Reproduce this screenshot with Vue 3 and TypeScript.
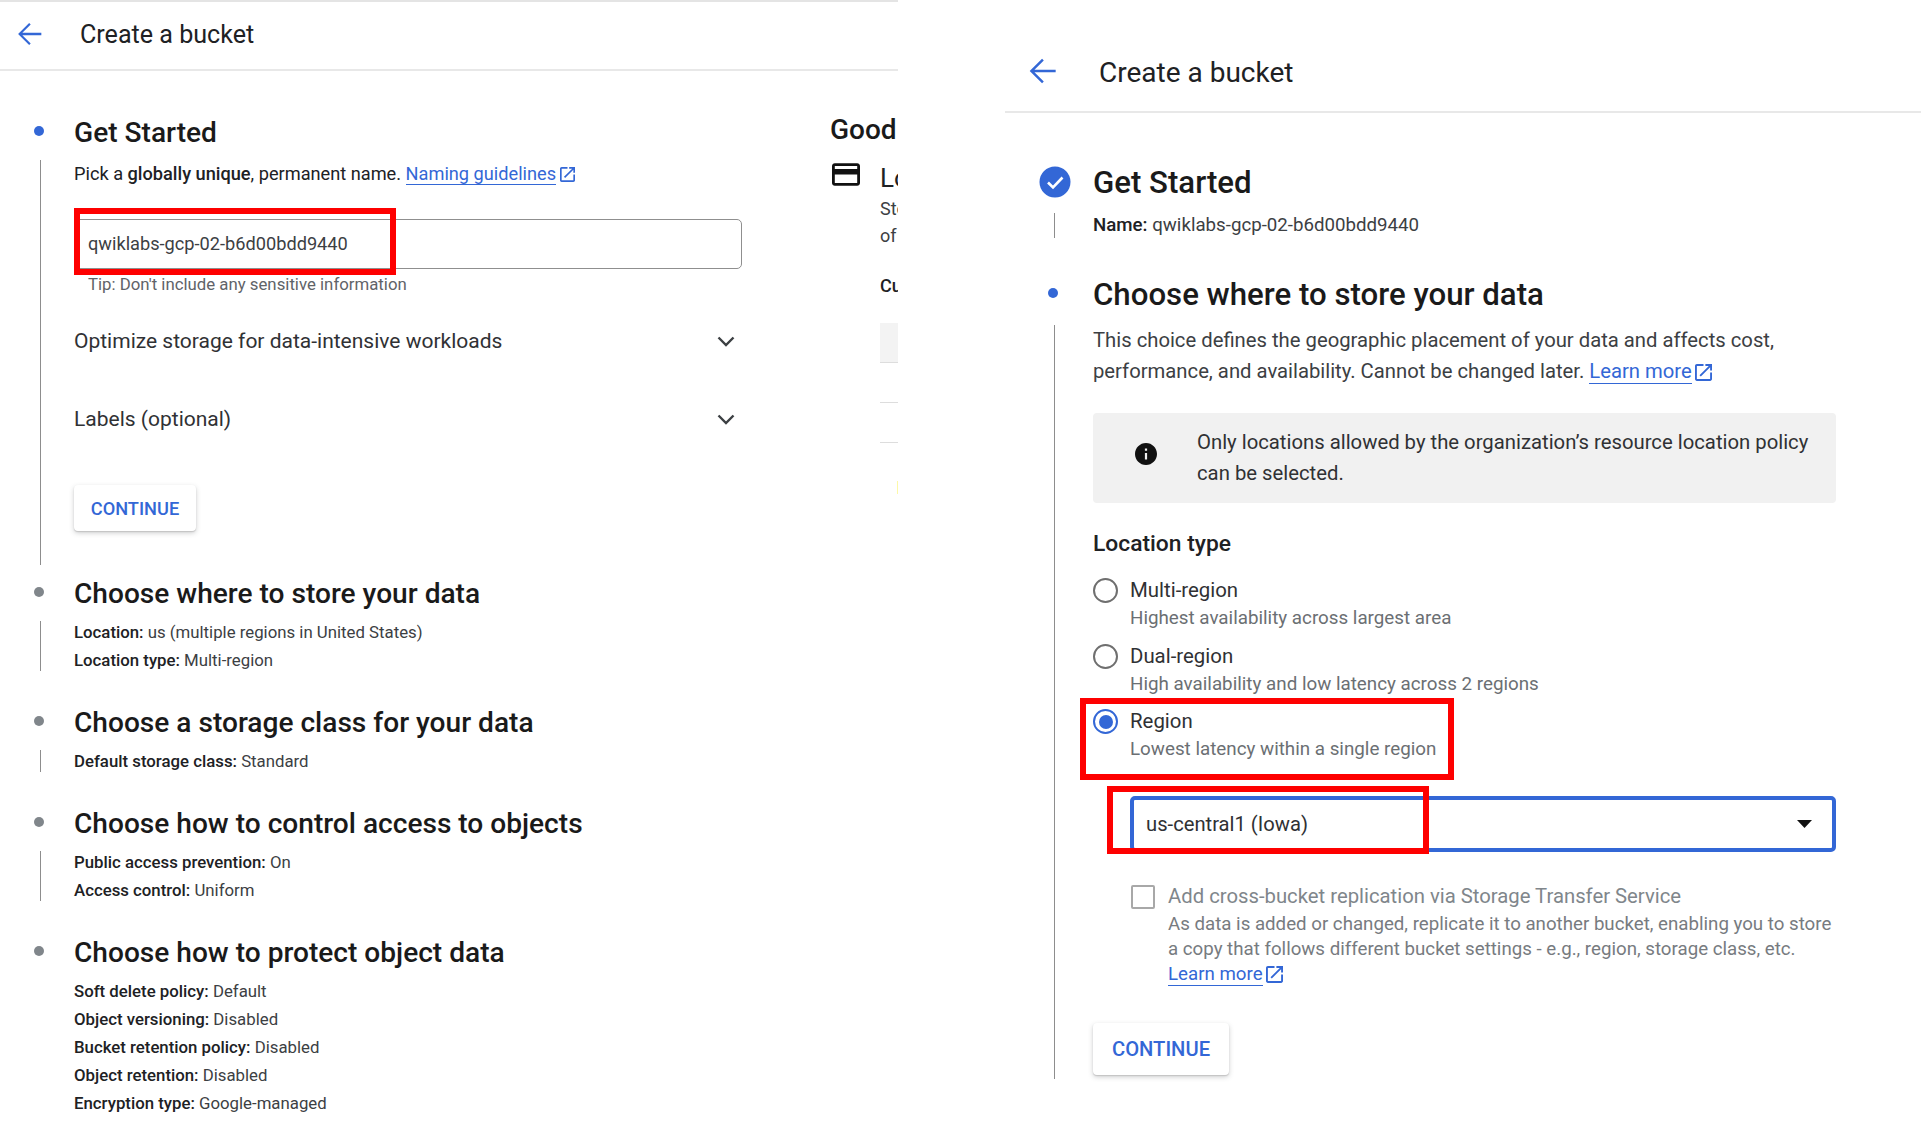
<script setup lang="ts">
interface Fact { label: string; value: string }
interface Summary { title: string; facts: Fact[] }

const summaries: Summary[] = [
  { title: 'Choose where to store your data', facts: [
    { label: 'Location', value: 'us (multiple regions in United States)' },
    { label: 'Location type', value: 'Multi-region' } ] },
  { title: 'Choose a storage class for your data', facts: [
    { label: 'Default storage class', value: 'Standard' } ] },
  { title: 'Choose how to control access to objects', facts: [
    { label: 'Public access prevention', value: 'On' },
    { label: 'Access control', value: 'Uniform' } ] },
  { title: 'Choose how to protect object data', facts: [
    { label: 'Soft delete policy', value: 'Default' },
    { label: 'Object versioning', value: 'Disabled' },
    { label: 'Bucket retention policy', value: 'Disabled' },
    { label: 'Object retention', value: 'Disabled' },
    { label: 'Encryption type', value: 'Google-managed' } ] },
]

const regions = [
  { name: 'Multi-region', hint: 'Highest availability across largest area', on: false },
  { name: 'Dual-region', hint: 'High availability and low latency across 2 regions', on: false },
  { name: 'Region', hint: 'Lowest latency within a single region', on: true },
]

const openNew = 'M19 19H5V5h7V3H5c-1.11 0-2 .9-2 2v14c0 1.1.89 2 2 2h14c1.1 0 2-.89 2-2v-7h-2v7zM14 3v2h3.59l-9.83 9.83 1.41 1.41L19 6.41V10h2V3h-7z'
const back = 'M20 11.2H6.6l5.9-5.9L11.4 4.2 3.6 12l7.8 7.8 1.1-1.1-5.9-5.9H20z'
</script>

<template>
  <div class="page">
    <section class="panel left">
      <header class="bar bar-left">
        <svg class="back" viewBox="0 0 24 24"><path :d="back" /></svg>
        <h1>Create a bucket</h1>
      </header>
      <div class="columns">
        <div class="steps">
          <div class="head first">
            <span class="dot blue"></span>
            <h2>Get Started</h2>
          </div>
          <div class="body form">
            <p class="lead">Pick a <b>globally unique</b>, permanent name. <a>Naming guidelines</a><svg class="ext" viewBox="3 3 18 18"><path :d="openNew" /></svg></p>
            <div class="name-input">
              <span>qwiklabs-gcp-02-b6d00bdd9440</span>
              <i class="mark mark-name"></i>
            </div>
            <p class="tip">Tip: Don't include any sensitive information</p>
            <div class="expanders">
              <div class="expander">
                <span>Optimize storage for data-intensive workloads</span>
                <svg class="chev" viewBox="0 0 18 11"><path d="M1.5 1.5 9 9l7.5-7.5" /></svg>
              </div>
              <div class="expander">
                <span>Labels (optional)</span>
                <svg class="chev" viewBox="0 0 18 11"><path d="M1.5 1.5 9 9l7.5-7.5" /></svg>
              </div>
            </div>
            <button class="cta small">CONTINUE</button>
          </div>
          <template v-for="(s, i) in summaries" :key="s.title">
            <div class="head" :class="{ spaced: i > 0 }">
              <span class="dot grey"></span>
              <h2>{{ s.title }}</h2>
            </div>
            <div class="body facts" :class="{ bare: i === summaries.length - 1 }">
              <p v-for="f in s.facts" :key="f.label"><b>{{ f.label }}:</b> {{ f.value }}</p>
            </div>
          </template>
        </div>
        <aside class="side">
          <h3>Good to know</h3>
          <div class="side-row">
            <svg class="card" viewBox="2 4 20 16"><path d="M20 4H4c-1.11 0-1.99.89-1.99 2L2 18c0 1.11.89 2 2 2h16c1.11 0 2-.89 2-2V6c0-1.11-.89-2-2-2zm0 14H4v-6h16v6zm0-10H4V6h16v2z" /></svg>
            <div class="side-text">
              <div class="side-title">Location pricing</div>
              <div class="side-line l1">Storage rates</div>
              <div class="side-line l2">of your data</div>
              <div class="side-line cu">Current</div>
              <div class="side-cell"></div>
              <div class="side-cell plain"></div>
              <div class="side-cell plain"></div>
              <div class="side-tick"></div>
            </div>
          </div>
        </aside>
      </div>
    </section>

    <section class="panel right">
      <header class="bar bar-right">
        <svg class="back big" viewBox="0 0 24 24"><path :d="back" /></svg>
        <h1>Create a bucket</h1>
      </header>
      <div class="steps r">
        <div class="head first">
          <svg class="done" viewBox="0 0 32 32"><circle cx="16" cy="16" r="15.5" /><path d="M9 16.5l5 5 9.5-10" /></svg>
          <h2>Get Started</h2>
        </div>
        <div class="body name-line"><p><b>Name:</b> qwiklabs-gcp-02-b6d00bdd9440</p></div>
        <div class="head second">
          <span class="dot blue"></span>
          <h2>Choose where to store your data</h2>
        </div>
        <div class="body where">
          <p class="para">This choice defines the geographic placement of your data and affects cost, performance, and availability. Cannot be changed later. <a>Learn more</a><svg class="ext" viewBox="3 3 18 18"><path :d="openNew" /></svg></p>
          <div class="notice">
            <svg class="info" viewBox="2 2 20 20"><path d="M12 2C6.48 2 2 6.48 2 12s4.48 10 10 10 10-4.48 10-10S17.52 2 12 2zm1 15h-2v-6h2v6zm0-8h-2V7h2v2z" /></svg>
            <p>Only locations allowed by the organization’s resource location policy can be selected.</p>
          </div>
          <h4>Location type</h4>
          <div class="radios">
            <div v-for="r in regions" :key="r.name" class="radio">
              <span class="knob" :class="{ on: r.on }"></span>
              <div>
                <div class="radio-name">{{ r.name }}</div>
                <div class="radio-hint">{{ r.hint }}</div>
              </div>
              <i v-if="r.on" class="mark mark-region"></i>
            </div>
          </div>
          <div class="select">
            <span>us-central1 (Iowa)</span>
            <svg class="caret" viewBox="0 0 15 8"><path d="M0 0h15L7.5 8z" /></svg>
            <i class="mark mark-select"></i>
          </div>
          <div class="replicate">
            <span class="box"></span>
            <div>
              <div class="rep-title">Add cross-bucket replication via Storage Transfer Service</div>
              <p class="rep-text">As data is added or changed, replicate it to another bucket, enabling you to store a copy that follows different bucket settings - e.g., region, storage class, etc.</p>
              <p class="rep-link"><a>Learn more</a><svg class="ext" viewBox="3 3 18 18"><path :d="openNew" /></svg></p>
            </div>
          </div>
          <button class="cta large">CONTINUE</button>
        </div>
      </div>
    </section>
  </div>
</template>

<style scoped>
.page {
  display: flex;
  width: 1921px;
  height: 1125px;
  overflow: hidden;
  background: #fff;
  color: #202124;
  font-family: Roboto, "Liberation Sans", sans-serif;
}
p, h1, h2, h3, h4 { margin: 0; }
b { font-weight: 500; color: #202124; }
a { color: #3367d6; border-bottom: 1.5px solid #3367d6; }
.panel { flex: none; }
.left { width: 898px; overflow: hidden; border-top: 2px solid #e4e4e4; height: 1123px; }
.right { width: 916px; margin-left: 107px; padding-top: 33px; }

.bar { display: flex; align-items: center; border-bottom: 2px solid #e8e8e8; }
.bar h1 { font-weight: 400; }
.bar-left { height: 67px; padding-left: 13px; }
.bar-left h1 { font-size: 25.1px; margin-left: 33px; margin-top: -2px; }
.bar-right { height: 78px; padding-left: 19px; }
.bar-right h1 { font-size: 28px; margin-left: 37px; }
.back { width: 34px; height: 34px; fill: #3367d6; flex: none; margin-top: -3px; }
.back.big { width: 38px; height: 38px; margin-top: -2px; }

.columns { display: flex; }
.steps { width: 830px; flex: none; padding-top: 33px; }
.steps.r { width: auto; padding-top: 38px; }

.head { display: flex; align-items: center; height: 56px; position: relative; padding-left: 74px; }
.head.spaced { margin-top: 23px; }
.head h2 { font-size: 28.1px; font-weight: 500; color: #1a1a1a; white-space: nowrap; }
.dot { position: absolute; left: 34px; width: 10px; height: 10px; border-radius: 50%; top: 22px; }
.dot.blue { background: #3367d6; }
.dot.grey { background: #80868b; }

.body { margin-left: 40px; padding-left: 33px; border-left: 1.5px solid #8d8d8d; }
.body.bare { border-left-color: transparent; }
.form { height: 405px; width: 668px; box-sizing: content-box; }
.lead { font-size: 18.2px; line-height: 22px; padding-top: 3px; }
.ext { width: 15px; height: 15px; fill: #3367d6; vertical-align: -2px; margin-left: 4px; }
.name-input {
  position: relative;
  display: flex;
  align-items: center;
  box-sizing: border-box;
  height: 50px;
  margin-top: 34px;
  padding: 0 0 2px 13px;
  border: 1.5px solid #8f8f8f;
  border-radius: 5px;
  font-size: 18.2px;
  color: #3c4043;
}
.mark { position: absolute; box-sizing: border-box; border: 6px solid #fe0000; display: block; }
.mark-name { left: -1px; top: -12px; width: 322px; height: 67px; }
.tip { margin-top: 5px; padding-left: 14px; font-size: 16.8px; line-height: 20px; color: #5f6368; }
.expanders { margin-top: 8px; }
.expander { display: flex; align-items: center; justify-content: space-between; height: 78px; font-size: 21px; color: #303134; padding-right: 7px; }
.chev { width: 18px; height: 11px; fill: none; stroke: #3c4043; stroke-width: 2.4; }
.cta {
  display: block;
  border: 0;
  border-radius: 4px;
  background: #fff;
  color: #3367d6;
  font-family: inherit;
  font-weight: 500;
  box-shadow: 0 1px 1px #c4c4c4, 0 2px 5px rgba(60, 64, 67, .25);
}
.cta.small { width: 122px; height: 46px; margin-top: 27px; font-size: 18.2px; }
.cta.large { width: 136px; height: 52px; margin-top: 36px; font-size: 20.2px; }

.facts p { font-size: 16.8px; line-height: 22px; color: #3c4043; }
.facts p + p { margin-top: 6px; }

.side { width: 68px; flex: none; overflow: hidden; white-space: nowrap; padding-top: 39px; }
.side h3 { font-size: 28px; font-weight: 500; line-height: 40px; color: #1a1a1a; }
.side-row { display: flex; margin-top: 13px; }
.card { width: 28px; height: 23px; fill: #111; flex: none; margin: 0 0 0 2px; }
.side-text { margin-left: 20px; }
.side-title { font-size: 26px; line-height: 30px; color: #202124; }
.side-line { font-size: 18px; line-height: 27px; color: #3c4043; }
.side-line.l1 { margin-top: 2px; }
.side-line.cu { margin-top: 23px; font-weight: 500; color: #202124; }
.side-cell { height: 39px; background: #f3f3f3; border-bottom: 1.5px solid #ddd; margin-top: 24px; width: 200px; }
.side-cell.plain { background: #fff; margin-top: 0; }
.side-tick { width: 2px; height: 13px; background: #fdf9a8; margin: 38px 0 0 17px; }

.done { position: absolute; left: 34px; top: 15px; width: 32px; height: 32px; }
.done circle { fill: #3367d6; }
.done path { fill: none; stroke: #fff; stroke-width: 2.6; }
.r .head { height: 62px; padding-left: 88px; }
.r .head h2 { font-size: 31.2px; }
.r .head.second { margin-top: 25px; }
.r .dot { left: 43px; top: 25px; }
.r .body { margin-left: 49px; padding-left: 38px; border-left-width: 1.5px; }
.name-line p { font-size: 18.7px; line-height: 25px; color: #3c4043; }
.where { height: 754px; }
.where .ext { width: 17px; height: 17px; vertical-align: -3px; margin-left: 3px; }
.para { width: 720px; font-size: 20.25px; line-height: 31px; color: #3c4043; }
.notice {
  display: flex;
  align-items: center;
  box-sizing: border-box;
  width: 743px;
  height: 90px;
  margin-top: 26px;
  padding-left: 42px;
  background: #f1f1f1;
  border-radius: 4px;
}
.info { width: 22px; height: 22px; flex: none; fill: #111; margin: 0 40px 8px 0; }
.notice p { font-size: 20.3px; line-height: 31px; width: 640px; color: #303134; }
h4 { margin-top: 28px; font-size: 22.8px; line-height: 26px; font-weight: 500; color: #202124; }
.radios { margin-top: 20px; display: flex; flex-direction: column; gap: 11.5px; }
.radio { position: relative; display: flex; gap: 12px; height: 54px; }
.knob {
  box-sizing: border-box;
  width: 25px;
  height: 25px;
  margin-top: 1px;
  flex: none;
  border: 2.5px solid #6f6f6f;
  border-radius: 50%;
  position: relative;
}
.knob.on { border-color: #3367d6; }
.knob.on::after { content: ""; position: absolute; inset: 3.5px; border-radius: 50%; background: #3367d6; }
.radio-name { font-size: 20.4px; line-height: 26px; color: #303134; }
.radio-hint { margin-top: 1px; font-size: 18.8px; line-height: 28px; color: #6b6f73; white-space: nowrap; }
.mark-region { left: -13px; top: -10px; width: 374px; height: 82px; }
.select {
  position: relative;
  display: flex;
  align-items: center;
  justify-content: space-between;
  box-sizing: border-box;
  width: 706px;
  height: 56px;
  margin: 34px 0 0 37px;
  padding: 0 20px 0 12px;
  border: 4px solid #3367d6;
  border-radius: 5px;
  font-size: 20.2px;
  color: #303134;
}
.caret { width: 15px; height: 8px; fill: #111; }
.mark-select { left: -27px; top: -14px; width: 322px; height: 68px; }
.replicate { display: flex; gap: 13px; margin: 32px 0 0 38px; width: 706px; }
.box { box-sizing: border-box; width: 24px; height: 24px; margin-top: 1px; flex: none; border: 2.5px solid #a8a8a8; border-radius: 2px; }
.rep-title { font-size: 20.3px; line-height: 25px; color: #80868b; white-space: nowrap; }
.rep-text { margin-top: 3px; width: 672px; font-size: 18.7px; line-height: 25px; color: #777b80; }
.rep-link { font-size: 18.7px; line-height: 25px; }
</style>

<style>
html, body { margin: 0; background: #fff; }
</style>
